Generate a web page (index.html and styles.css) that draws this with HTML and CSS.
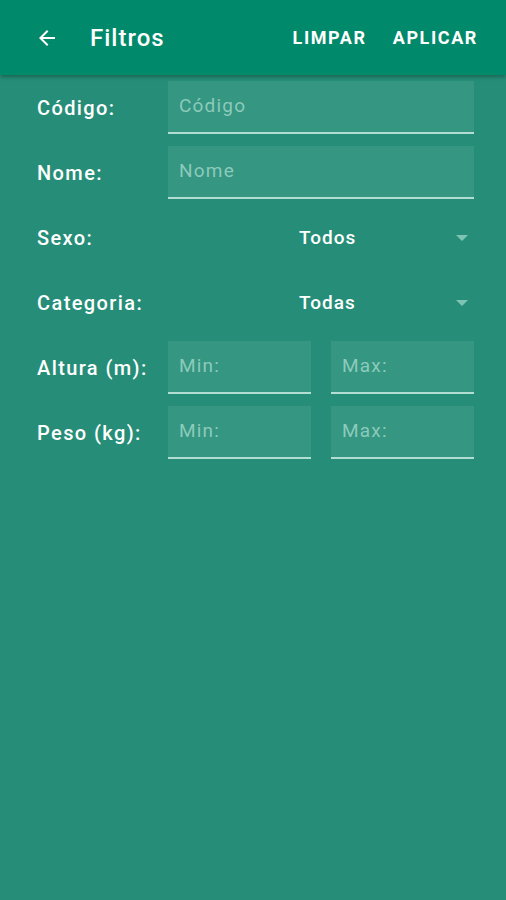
FILE: index.html
```html
<!DOCTYPE html>
<html>
  <head>
    <title>Filtros</title>
    <link rel="stylesheet" href="styles.css">
  </head>
  <body>
    <div class="appbar">
      <svg class="back" width="24" height="24" viewBox="0 0 24 24">
        <path d="M20 11H7.83l5.59-5.59L12 4l-8 8 8 8 1.41-1.41L7.83 13H20v-2z" fill="#fff"/>
      </svg>
      <h1 class="title">Filtros</h1>
      <div class="actions">
        <span class="action">LIMPAR</span>
        <span class="action">APLICAR</span>
      </div>
    </div>
    <div class="form">
      <div class="row">
        <label class="label">Código:</label>
        <div class="field"><span class="hint">Código</span></div>
      </div>
      <div class="row">
        <label class="label">Nome:</label>
        <div class="field"><span class="hint">Nome</span></div>
      </div>
      <div class="row">
        <label class="label">Sexo:</label>
        <div class="spinner">
          <span class="value">Todos</span>
          <span class="caret"></span>
        </div>
      </div>
      <div class="row">
        <label class="label">Categoria:</label>
        <div class="spinner">
          <span class="value">Todas</span>
          <span class="caret"></span>
        </div>
      </div>
      <div class="row">
        <label class="label">Altura (m):</label>
        <div class="pair">
          <div class="field"><span class="hint">Min:</span></div>
          <div class="field"><span class="hint">Max:</span></div>
        </div>
      </div>
      <div class="row">
        <label class="label">Peso (kg):</label>
        <div class="pair">
          <div class="field"><span class="hint">Min:</span></div>
          <div class="field"><span class="hint">Max:</span></div>
        </div>
      </div>
    </div>
  </body>
</html>
```

FILE: styles.css
```css
html,
body {
  height: 100%;
}
body {
  margin: 0;
  background-color: #268e78;
  font-family: Roboto, "Liberation Sans", sans-serif;
  color: #fff;
}
.appbar {
  height: 75px;
  background-color: #00896a;
  display: flex;
  align-items: center;
  padding: 0 28px 0 35px;
  box-shadow: 0 2px 4px rgba(0, 0, 0, 0.3);
  position: relative;
}
.back {
  margin-right: 31px;
}
.title {
  margin: 0;
  font-size: 24px;
  font-weight: 500;
  letter-spacing: 1px;
  flex: 1;
}
.actions {
  display: flex;
  gap: 26px;
}
.action {
  font-size: 18px;
  font-weight: 700;
  letter-spacing: 1.6px;
}
.form {
  display: flex;
  flex-direction: column;
  gap: 12px;
  padding: 6px 32px 0 37px;
}
.row {
  display: flex;
  align-items: center;
  height: 53px;
}
.label {
  width: 131px;
  font-size: 20px;
  font-weight: 500;
  letter-spacing: 1.4px;
  white-space: nowrap;
}
.field {
  flex: 1;
  height: 100%;
  box-sizing: border-box;
  background-color: rgba(255, 255, 255, 0.07);
  border-bottom: 2px solid #b2ddd3;
  display: flex;
  align-items: center;
  padding: 0 11px 2px;
}
.hint {
  font-size: 19px;
  letter-spacing: 1.2px;
  color: #8ccabb;
}
.spinner {
  flex: 1;
  display: flex;
  align-items: center;
  padding-left: 131px;
  padding-right: 6px;
}
.value {
  flex: 1;
  font-size: 19px;
  font-weight: 500;
  letter-spacing: 1px;
}
.caret {
  width: 0;
  height: 0;
  border-left: 6px solid transparent;
  border-right: 6px solid transparent;
  border-top: 6px solid #7fc4b3;
}
.pair {
  flex: 1;
  height: 100%;
  display: flex;
  gap: 20px;
}
```
